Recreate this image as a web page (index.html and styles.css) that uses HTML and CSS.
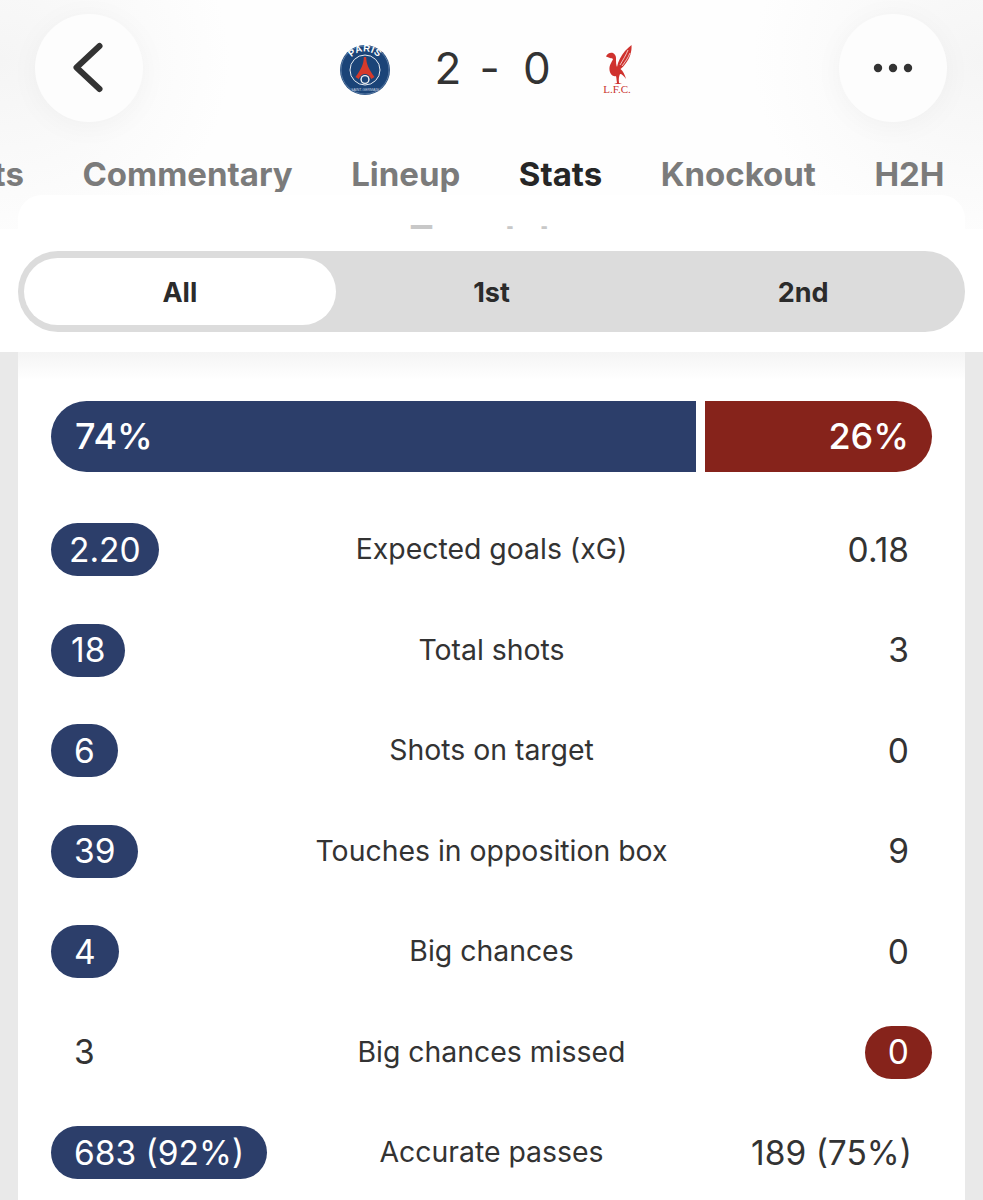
FILE: index.html
```html
<!DOCTYPE html>
<html lang="en">
<head>
<meta charset="utf-8">
<title>PSG 2 - 0 Liverpool stats</title>
<link rel="stylesheet" href="styles.css">
</head>
<body>
<header class="header">
  <div class="topbar">
    <button class="round-btn" aria-label="Back">
      <svg width="36" height="54" viewBox="0 0 36 54"><path d="M28.500 5 L5.500 26.500 L28.500 48" fill="none" stroke="#333" stroke-width="6" stroke-linecap="round" stroke-linejoin="round"/></svg>
    </button>
    <div class="score">
      <svg class="crest" width="52" height="52" viewBox="0 0 52 52">
        <defs><path id="paris-arc" d="M7.500 26 A18.500 18.500 0 0 1 44.500 26"/></defs>
        <circle cx="26" cy="26" r="25" fill="#1b4478"/>
        <circle cx="26" cy="26" r="24" fill="none" stroke="#7f9cc0" stroke-width=".6"/>
        <circle cx="26" cy="26" r="15" fill="#1b4478" stroke="#e8edf3" stroke-width="1"/>
        <path d="M24.800 13 h2.400 c0 7 2.500 12 8.300 20 l-3.200 2 c-1.500-3-3.300-5-6.300-5 s-4.800 2-6.300 5 l-3.200-2 c5.800-8 8.300-13 8.300-20z" fill="#d63a2b"/>
        <circle cx="26" cy="35.500" r="4.600" fill="#f2f2f2"/>
        <circle cx="26" cy="35.500" r="3.200" fill="#1b4478"/>
        <text class="crest-paris" text-anchor="middle"><textPath href="#paris-arc" startOffset="50%">PARIS</textPath></text>
        <text class="crest-sub" x="26" y="46.500" text-anchor="middle">SAINT-GERMAIN</text>
      </svg>
      <span class="score-text">2</span>
      <span class="score-text score-dash">-</span>
      <span class="score-text">0</span>
      <svg class="crest-lfc" width="34" height="54" viewBox="0 0 34 54">
        <path d="M30.500 4 C31 10 29 17 25 22 C23 25 21 27 19.500 28 C22 30 24 34 25 38 C23 35 21 33 19 33 C18 35 17.500 38 18 42 L21 43 L13 43 L16 42 C15.500 39 15.500 37 15 35 C12 36 9 33 8.500 29 C8 24 11 21 12 18 C11 17 10 17.500 9 17 L5 15.500 C6 13 9 11 12 12 C14 13 15 15 15 17 C15 21 15 24 16 26 C17 20 20 15 24 10 C26 8 28 6 30.500 4 Z" fill="#cf322e"/>
        <path d="M27 9 C25 14 22 19 19 24 M29 12 C27 17 24 21 21 25" fill="none" stroke="#fff" stroke-width=".7"/>
        <text class="crest-lfc-text" x="16" y="52" text-anchor="middle">L.F.C.</text>
      </svg>
    </div>
    <button class="round-btn" aria-label="More">
      <svg width="44" height="10" viewBox="0 0 44 10"><circle cx="7" cy="5" r="4.200" fill="#333"/><circle cx="22" cy="5" r="4.200" fill="#333"/><circle cx="37" cy="5" r="4.200" fill="#333"/></svg>
    </button>
  </div>
  <nav class="tabs">
    <span class="tab">Facts</span>
    <span class="tab">Commentary</span>
    <span class="tab">Lineup</span>
    <span class="tab tab-active">Stats</span>
    <span class="tab">Knockout</span>
    <span class="tab">H2H</span>
  </nav>
  <div class="peek"><span class="peek-title">Top stats</span></div>
</header>

<div class="segment-band">
  <div class="segment">
    <span class="segment-item segment-active">All</span>
    <span class="segment-item">1st</span>
    <span class="segment-item">2nd</span>
  </div>
</div>

<main class="card">
  <div class="possession">
    <div class="poss poss-home" style="width: 645px">74%</div>
    <div class="poss poss-away" style="width: 227px">26%</div>
  </div>
  <div class="rows">
    <div class="row"><div class="side"><span class="val home tighter">2.20</span></div><span class="label">Expected goals (xG)</span><div class="side end"><span class="val">0.18</span></div></div>
    <div class="row"><div class="side"><span class="val home tight">18</span></div><span class="label">Total shots</span><div class="side end"><span class="val">3</span></div></div>
    <div class="row"><div class="side"><span class="val home">6</span></div><span class="label">Shots on target</span><div class="side end"><span class="val">0</span></div></div>
    <div class="row"><div class="side"><span class="val home">39</span></div><span class="label">Touches in opposition box</span><div class="side end"><span class="val">9</span></div></div>
    <div class="row"><div class="side"><span class="val home">4</span></div><span class="label">Big chances</span><div class="side end"><span class="val">0</span></div></div>
    <div class="row"><div class="side"><span class="val">3</span></div><span class="label">Big chances missed</span><div class="side end"><span class="val away">0</span></div></div>
    <div class="row"><div class="side"><span class="val home">683 (92%)</span></div><span class="label">Accurate passes</span><div class="side end"><span class="val tight">189 (75%)</span></div></div>
  </div>
</main>
</body>
</html>
```
FILE: styles.css
```css
* { box-sizing: border-box; }
html, body { margin: 0; padding: 0; }
body {
  width: 983px;
  height: 1200px;
  overflow: hidden;
  background: #e9e9e9;
  font-family: Inter, "Liberation Sans", sans-serif;
  color: #333;
}

.header {
  height: 229px;
  overflow: hidden;
  background:
    radial-gradient(ellipse 230px 200px at 0 60px, #f5f5f5, rgba(255,255,255,0) 100%),
    radial-gradient(ellipse 230px 200px at 983px 60px, #f5f5f5, rgba(255,255,255,0) 100%),
    #fefefe;
  display: flex;
  flex-direction: column;
}

.topbar {
  height: 108px;
  margin-top: 14px;
  padding: 0 36px 0 35px;
  display: flex;
  justify-content: space-between;
  align-items: center;
}

.round-btn {
  width: 108px;
  height: 108px;
  padding: 0;
  border: 0;
  border-radius: 50%;
  background: #fdfdfd;
  box-shadow: 0 4px 30px rgba(0,0,0,.04);
  display: flex;
  align-items: center;
  justify-content: center;
}

.score {
  display: flex;
  align-items: center;
  margin-right: 8px;
}
.crest { margin: 4px 35px 0 0; }
.crest-lfc { margin: 0 0 0 42px; }
.crest-paris { font: 700 9.500px "Liberation Sans", sans-serif; fill: #fff; letter-spacing: .4px; }
.crest-sub { font: 400 3.500px "Liberation Sans", sans-serif; fill: #c9d4e2; }
.crest-lfc-text { font: 400 11px "Liberation Serif", serif; fill: #c9332e; }
.score-text {
  font-size: 44px;
  line-height: 52px;
  font-weight: 400;
  color: #333;
  width: 44.500px;
  text-align: center;
}
.score-dash { padding-right: 6px; }

.tabs {
  margin-top: 34px;
  height: 36px;
  padding-right: 38.500px;
  display: flex;
  justify-content: flex-end;
  align-items: center;
  gap: 58.500px;
  overflow: hidden;
}
.tab {
  flex: none;
  font-size: 33px;
  line-height: 36px;
  font-weight: 700;
  color: #7b7b7b;
}
.tab-active { color: #262626; }

.peek {
  margin: 3px 18px 0;
  height: 34px;
  overflow: hidden;
  border-radius: 24px 24px 0 0;
  background: #fff;
  text-align: center;
}
.peek-title {
  display: block;
  margin-left: -2px;
  padding-top: 23px;
  font-size: 36px;
  line-height: 40px;
  font-weight: 700;
  color: #c8c8c8;
}

.segment-band {
  height: 123px;
  padding: 22px 18px 20px;
  background: #fff;
}
.segment {
  height: 81px;
  padding: 7px 6px;
  border-radius: 40px;
  background: #dcdcdc;
  display: grid;
  grid-template-columns: repeat(3, 1fr);
}
.segment-item {
  display: flex;
  align-items: center;
  justify-content: center;
  padding-top: 1px;
  border-radius: 34px;
  font-size: 27px;
  font-weight: 700;
  color: #2b2b2b;
}
.segment-active { background: #fff; }

.card {
  height: 848px;
  margin: 0 18px;
  padding: 49px 33px 0;
  background: linear-gradient(#f4f4f4, #fff 28px);
}

.possession {
  display: flex;
  gap: 9px;
  height: 71px;
}
.poss {
  flex: none;
  display: flex;
  align-items: center;
  padding: 0 23px 2px 24px;
  font-size: 36px;
  font-weight: 500;
  color: #fff;
}
.poss-home { background: #2c3e6a; border-radius: 36px 0 0 36px; }
.poss-away { background: #86231b; border-radius: 0 36px 36px 0; justify-content: flex-end; }

.rows {
  margin-top: 51px;
  display: flex;
  flex-direction: column;
  gap: 47.500px;
}
.row {
  display: grid;
  grid-template-columns: 1fr auto 1fr;
  align-items: center;
  height: 53px;
}
.side { display: flex; }
.end { justify-content: flex-end; }
.val {
  height: 53px;
  padding: 0 23px;
  border-radius: 27px;
  display: flex;
  align-items: center;
  font-size: 33.500px;
  font-weight: 400;
  color: #333;
}
.tight { padding: 0 20px; }
.tighter { padding: 0 18px; }
.home { background: #2c3e6a; color: #fff; }
.away { background: #86231b; color: #fff; }
.label {
  margin-top: -2px;
  font-size: 28.400px;
  font-weight: 400;
  color: #333;
}
```
